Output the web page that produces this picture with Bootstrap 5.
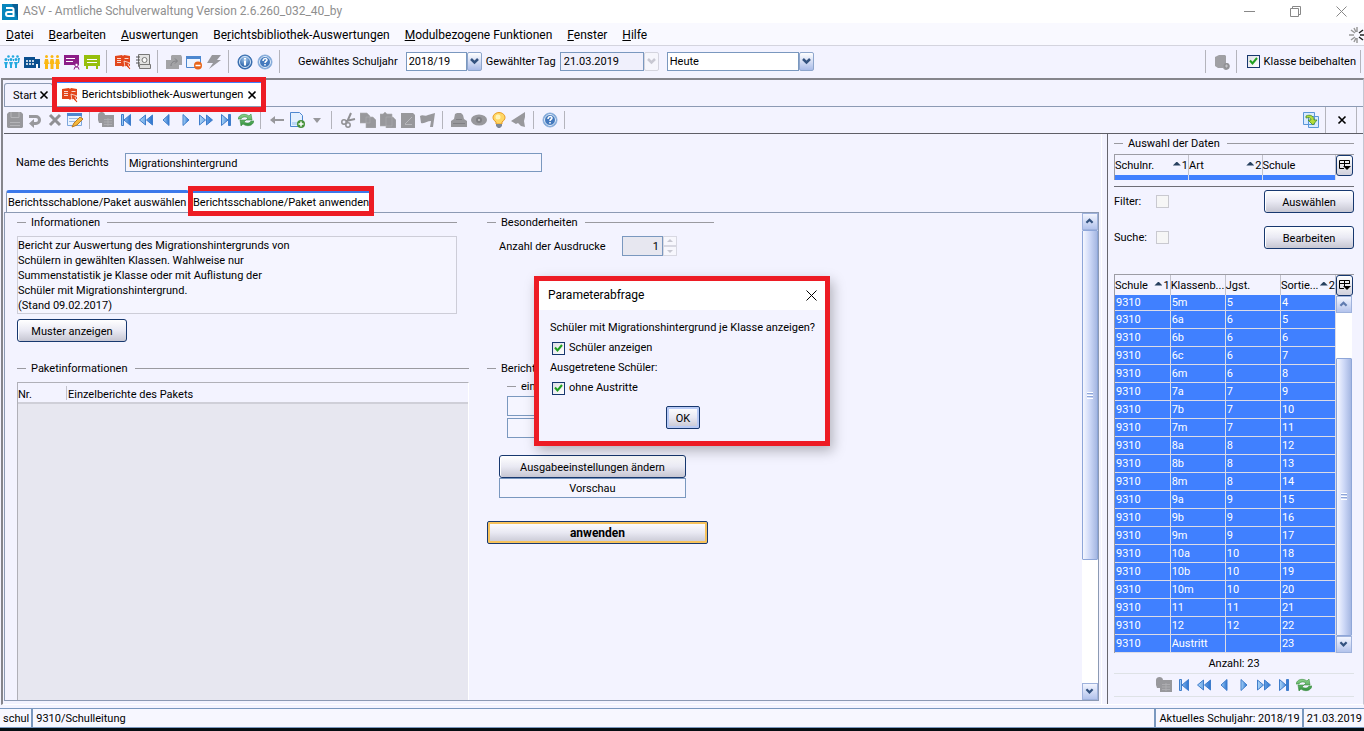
<!DOCTYPE html>
<html lang="de">
<head>
<meta charset="utf-8">
<meta name="viewport" content="width=device-width, initial-scale=1">
<title>ASV - Amtliche Schulverwaltung</title>
<link href="https://cdn.jsdelivr.net/npm/bootstrap@5.3.0/dist/css/bootstrap.min.css" rel="stylesheet">
<style>
:root{--face:#f3f3ff;--line:#8c9ab4;--field:#7a98bf;--navy:#17386f;--mark:#ed1c24;--sel:#4080ff}
body{font-family:Roboto,"Noto Sans",sans-serif;font-size:11px;line-height:15px;color:#000;background:var(--face);overflow:hidden}
svg{display:block}
button,input,select{font:inherit;color:inherit}
.titlebar{height:23px;background:#fff;color:#8f8f8f;font-size:12px;padding-left:2px}
.titlebar .caption{padding-left:5px}
.wbtn{width:46px;height:20px;border:0;background:none;padding:0}
.menubar{height:23px;background:#f9f9ff;border-bottom:1px solid #d4d4de;font-size:12px;padding:2px 0 0 6px;gap:15px}
.menubar a{color:#000;text-decoration:none}
.mainbar{height:31px;padding-left:2px;margin-bottom:1px}
.tool{width:20px;height:22px;border:0;background:none;padding:0 2px}
.tool svg{width:16px;height:16px}
.vsep{width:1px;margin:0 6px 0 4px;background:#b4b4bc;align-self:stretch;flex:none}
.combo{height:19px;border:1px solid var(--field);background:#fff;padding:0 3px;appearance:none;border-radius:0;line-height:15px}
select.combo{padding:0 0 0 2px}
.drop{width:15px;height:19px;border:1px solid #8ea6cc;border-radius:2px;background:linear-gradient(#fff,#a9bbe8);padding:0}
.drop:disabled{border-color:#d4d4de;background:#f6f6fc}
input.tick{appearance:none;width:13px;height:13px;border:1px solid var(--navy);margin:0;flex:none;background:#fff}
input.tick:checked{background:linear-gradient(135deg,#dfe0e4,#fff)}
input.tick:disabled{border-color:#c9c9d0;background:#f6f6f6}
.tickbox{position:relative;display:flex}
.tickbox svg{position:absolute;inset:2px;pointer-events:none}
.frame{border:2px solid #85858c;border-right:1px solid #c4c6d2;border-bottom:1px solid #fff;margin:0 0 3px 1px;padding-left:1px}
.doctabs{height:27px;border-bottom:1px solid var(--line)}
.doctab{border:1px solid var(--line);border-bottom:0;border-radius:3px 3px 0 0;height:23px;padding:0 2px 0 8px;gap:2px;position:relative}
.closer{border:0;background:none;padding:0;width:11px;height:14px}
.marked{position:relative}
.marked::after{content:"";position:absolute;border:5px solid var(--mark);pointer-events:none;z-index:2}
.doctab.marked{background:#fff;border-width:2px 0 0;border-top-color:var(--sel);border-radius:0;height:25px;padding:0 3px 0 5px;margin-left:4px;gap:4px}
.doctab.marked::after{inset:-6px -5px -6px}
.editbar{height:27px;border-bottom:1px solid #5e5e66;padding-left:1px}
.leftpane{border-right:1px solid #fff}
.reportname{padding:19px 0 0 12px}
.reportname label{width:109px}
.reportname input{width:417px;height:19px;border:1px solid var(--field);background:#f5f5ff;padding:1px 3px 0}
.subtabs{margin-top:18px;padding-left:2px;height:22px}
.subtab{border:1px solid var(--line);border-top:3px solid #3c78ea;border-bottom:0;border-radius:3px 3px 0 0;background:#fafaff;padding:0 0 0 1px;height:22px;white-space:nowrap;width:183px;text-align:left}
.subtab.marked{background:#fff;border-width:3px 0 0;border-radius:0;margin-left:4px;padding:0;width:176px}
.subtab.marked::after{inset:-7px -5px -4px}
.subpane{border:1px solid var(--line);margin:0 2px 3px 0}
.legendline{gap:5px;height:18px}
.legendline::before{content:"";width:9px;height:1px;background:#9a9aa0}
.legendline::after{content:"";flex:1;height:1px;background:#9a9aa0;margin-left:2px}
.colinfo{width:452px;margin-left:12px}
.colrun{width:227px;margin-left:18px}
.infotext{border:1px solid #cdcdd8;height:78px;padding:1px 0 0;width:440px;margin-top:5px;background:#f5f5ff}
.swing{border:1px solid var(--navy);border-radius:3px;background:linear-gradient(#fff,#e9e9f3 50%,#c6c6d2);height:23px;padding:1px 0 0;box-shadow:inset 1px 0 #fff}
.go{border-radius:2px;box-shadow:inset 0 0 0 2px #f6c25c;font-weight:700;font-size:12px;width:221px}
.packet{border:1px solid #b0b0b8;border-right-color:#fff;border-bottom:0;background:#e7e7f0;margin-top:5px}
.packet table{width:100%;background:var(--face);border-bottom:2px solid #cfcfd8}
.packet th{font-weight:400;height:20px;padding:3px 0 0}
.packet th + th{background:linear-gradient(#c2c2cc,#c2c2cc) 0 3px/1px 14px no-repeat;padding-left:2px}
.spinval{width:41px;height:20px;border:1px solid var(--field);background:#e7e7f0;text-align:right;padding:0 3px}
.spinbtn{width:14px;height:10px;border:1px solid #d8d8e2;background:#f7f7fd;padding:0}
.plainfield{height:20px;border:1px solid var(--field);background:#f5f5ff}
.sbar{width:16px;background:#fff;flex:none}
.sbar button{height:17px;border:1px solid #9fb2dc;background:linear-gradient(#f2f5ff,#b3c3ec);padding:0;width:100%}
.thumb{border:1px solid #8ea6d8;border-radius:1px;background:linear-gradient(90deg,#f5f7ff,#cdd8f7 50%,#a5b7e2)}
.grip{width:6px;height:7px;background:repeating-linear-gradient(#fff 0 1px,#8ea6d8 1px 2px,transparent 2px 3px)}
.sidepane{width:256px;flex:none;border-left:1px solid #66666e;margin-left:5px;padding:0 9px 0 6px}
.sidepane table{width:221px;table-layout:fixed}
.sidepane th{font-weight:400;white-space:nowrap;padding:0;height:20px;border-right:1px solid #c2c2cc}
.sidepane td{background:var(--sel);color:#fff;border:1px solid #dcdce6;border-width:0 1px 1px 0;height:18px;padding:1px 0 0 1px;line-height:15px}
.gridwrap{border:1px solid #9c9ca4;border-width:1px 0 0 1px}
.sidepane .cutrow td{height:15px;line-height:13px;padding-top:0}
.sidepane .selstrip td{height:5px;border-bottom:0}
.colbtn{width:17px;height:21px;border:1px solid var(--navy);border-radius:3px;background:linear-gradient(#fff,#d0d0dc);padding:0}
.rule{height:1px;background:#6e6e76}
.up{width:8px;height:4px;background:#27405f;clip-path:polygon(50% 0,100% 100%,0 100%);display:inline-block;margin:0 1px 3px 0}
.status{border:1px solid var(--field);border-width:1px 0 1px;background:#f7f7ff;height:20px}
.status div{border-right:2px solid var(--field);padding:2px 2px 0 3px}
.taskedge{height:3px;background:#050d12}
.ask{position:absolute;left:534px;top:276px;width:296px;height:170px;border:5px solid var(--mark);background:var(--face);box-shadow:3px 5px 12px #0004;z-index:5}
.ask header{height:29px;background:#fff;padding:0 8px 0 9px;font-size:12px}
.ask .fields{padding:8px 0 0 11px;height:88px;line-height:20px;white-space:nowrap}
.ok{width:34px;border-radius:2px;box-shadow:inset 0 0 0 2px #b9cbf6;margin:8px 0 0 127px}
</style>
</head>
<body class="vh-100 d-flex flex-column">
<svg width="0" height="0" class="position-absolute" aria-hidden="true">
<defs>
<linearGradient id="bl" x1="0" x2="1"><stop offset="0" stop-color="#a9d4f8"/><stop offset="1" stop-color="#2a72cf"/></linearGradient>
<linearGradient id="gn" x1="0" x2="0" y2="1"><stop offset="0" stop-color="#8fd38c"/><stop offset="1" stop-color="#2f8f3c"/></linearGradient>
<radialGradient id="orb" cy=".3"><stop offset="0" stop-color="#a8cbef"/><stop offset="1" stop-color="#3268ac"/></radialGradient>
</defs>
<symbol id="people" viewBox="0 0 16 16"><g fill="#25a9df"><circle cx="4.500" cy="2.500" r="1.300"/><circle cx="9" cy="2.500" r="1.300"/><circle cx="13.500" cy="2.500" r="1.300"/><circle cx="2" cy="5.500" r="1.500"/><circle cx="7" cy="5.500" r="1.500"/><circle cx="12" cy="5.500" r="1.500"/><path d="M0 8h4l-1 3v3H1v-3zM5 8h4l-1 3v3H6v-3zM10 8h4l-1 3v3h-2v-3zM4 5h1v2H4zM9 5h1v2H9zM14 4h2l-1 5h-1z"/></g></symbol>
<symbol id="school" viewBox="0 0 16 16"><path fill="#0b4f8f" d="M0 3h11v2h5v9H0z"/><path stroke="#fff" stroke-width="1.500" stroke-dasharray="2 1" d="M2 7h8M2 10h8"/><path fill="#fff" d="M12 10h2v4h-2z"/></symbol>
<symbol id="staff" viewBox="0 0 16 16"><g fill="#fbb814"><circle cx="2.500" cy="2.500" r="1.500"/><circle cx="8" cy="2.500" r="1.500"/><circle cx="13.500" cy="2.500" r="1.500"/><path d="M1 5h3l1 5H4v5H1v-5H0zM6.500 5h3l1 5h-1v5h-3v-5h-1zM12 5h3l1 5h-1v5h-3v-5h-1z"/></g></symbol>
<symbol id="board" viewBox="0 0 16 16"><path fill="#8c1d88" d="M0 1h15v10H0z"/><path stroke="#fff" d="M2 4.500h9M2 7.500h7"/><circle cx="12.500" cy="11" r="1.700" fill="#fff" stroke="#8c1d88"/><path d="M10 15.500l1-2.500h3l1 2.500" stroke="#8c1d88" fill="none"/></symbol>
<symbol id="chalk" viewBox="0 0 16 16"><path fill="#96bf0d" d="M0 1h16v11H0zM2 12h2v3H2zM12 12h2v3h-2z"/><path stroke="#fff" d="M3 5.500h10M3 8.500h10"/></symbol>
<symbol id="book" viewBox="0 0 16 16"><path fill="#e2471c" d="M0 2l7-1 1 1 1-1 6 1v10H9l-1 1-1-1H0z"/><path stroke="#fff" stroke-width=".8" d="M2 4.500h4M2 6.500h4M2 8.500h4M9.500 4.500h4"/><path fill="#e2471c" stroke="#fff" stroke-width=".7" d="M9 7l6 2-2 1.500 2.500 4-1 1-3.500-3.500-1 1.500z"/></symbol>
<symbol id="notebook" viewBox="0 0 16 16"><path fill="#e2e2e2" stroke="#777" d="M3.500.5h11v12h-11z"/><path stroke="#555" d="M1 3h4M1 6h4M1 9h4"/><path stroke="#777" fill="#ddd" d="M4.500 10.500h11v4h-11z"/><circle cx="9.500" cy="6" r="2.500" fill="#fafafa" stroke="#777"/></symbol>
<symbol id="folder" viewBox="0 0 16 16"><path fill="#a3a3a6" d="M0 6h5V2l1-1h9l1 2v8h-3v4H0z"/><path d="M5 12c0-4 3-5 6-5M9 4.500L11.500 7 9 9.500" fill="none" stroke="#808084"/></symbol>
<symbol id="winminus" viewBox="0 0 16 16"><path fill="#eef5ff" stroke="#4d87cf" d="M.5 2.500h14v11H.5z"/><path fill="#4d87cf" d="M0 2h15v3H0z"/><circle cx="12" cy="11.500" r="4" fill="#e8661a"/><path stroke="#fff" stroke-width="1.500" d="M9.500 11.500h5"/></symbol>
<symbol id="bolt" viewBox="0 0 16 16"><path fill="#98989c" d="M6 1h9l-4 5h4L3 15l4-6H1z"/></symbol>
<symbol id="info" viewBox="0 0 16 16"><circle cx="8" cy="8" r="7" fill="url(#orb)" stroke="#2f67ab"/><circle cx="8" cy="8" r="5.500" fill="none" stroke="#d7e8fa"/><path d="M8 4v1.600M8 6.500v5" stroke="#fff" stroke-width="2"/></symbol>
<symbol id="help" viewBox="0 0 16 16"><circle cx="8" cy="8" r="7" fill="#6b9bd2" stroke="#8db0dc"/><circle cx="8" cy="8" r="5.500" fill="#4479bd" stroke="#e5effb"/><path d="M6 7c0-3 4-3 4-1 0 1.500-2 1-2 3M8 10v1.500" fill="none" stroke="#fff" stroke-width="1.500"/></symbol>
<symbol id="save" viewBox="0 0 16 16"><path fill="#98989c" d="M0 2l2-2h12l2 2v13l-1 1H1l-1-1z"/><path stroke="#b4b4b8" d="M4 0v5.500h8V0M3 10.500h10M3 13.500h10" fill="none"/></symbol>
<symbol id="undo" viewBox="0 0 16 16"><path d="M2 4.500h7a3.500 3.500 0 0 1 0 7H6" fill="none" stroke="#98989c" stroke-width="3"/><path fill="#98989c" d="M7 7v9l-5-4.500z"/></symbol>
<symbol id="cross" viewBox="0 0 16 16"><path d="M3 3l10 10M13 3L3 13" stroke="#909094" stroke-width="3"/></symbol>
<symbol id="formedit" viewBox="0 0 16 16"><path fill="#eaf3ff" stroke="#7ca6dc" d="M.5 1.500h14v12H.5z"/><path fill="#4d87cf" d="M0 1h15v3H0z"/><path stroke="#9dbbe2" d="M2 6.500h11M2 9.500h8"/><path d="M5 15l2-4 6-6 3 2-6 6z" fill="#f5b83a" stroke="#b87822"/></symbol>
<symbol id="gtable" viewBox="0 0 16 16"><path fill="#98989c" d="M0 3c0-4 7-4 7 0h9v12H4v-4H1L0 8z"/><path stroke="#b0b0b4" stroke-width=".8" d="M6 7.500h8M6 10h8M6 12.500h8M10 6v8"/></symbol>
<symbol id="prev" viewBox="0 0 16 16"><path fill="url(#bl)" stroke="#3f7dcb" d="M11 2.500v11L5 8z"/></symbol>
<symbol id="next" viewBox="0 0 16 16"><path fill="url(#bl)" stroke="#3f7dcb" d="M5 2.500v11L11 8z"/></symbol>
<symbol id="rew" viewBox="0 0 16 16"><path fill="url(#bl)" stroke="#3f7dcb" d="M7.500 3v10L1.500 8zM14.500 3v10l-6-5z"/></symbol>
<symbol id="ffwd" viewBox="0 0 16 16"><path fill="url(#bl)" stroke="#3f7dcb" d="M1.500 3v10l6-5zM8.500 3v10l6-5z"/></symbol>
<symbol id="first" viewBox="0 0 16 16"><path fill="url(#bl)" stroke="#3f7dcb" d="M3.500 2.500h2v11h-2zM12.500 2.500v11L6 8z"/></symbol>
<symbol id="last" viewBox="0 0 16 16"><path fill="url(#bl)" stroke="#3f7dcb" d="M10.500 2.500h2v11h-2zM3.500 2.500v11L10 8z"/></symbol>
<symbol id="refresh" viewBox="0 0 16 16"><path fill="url(#gn)" stroke="#3c8d42" stroke-width=".6" d="M0 7c1-5 7-6 11-3l2-2 1 6H8l2-2C7 4 4 5 3 7zM16 9c-1 5-7 6-11 3l-2 2-1-6h6l-2 2c3 2 6 1 7-1z"/></symbol>
<symbol id="back" viewBox="0 0 16 16"><path fill="#98989c" d="M1 8l5-4v3h9v2H6v3z"/></symbol>
<symbol id="newdoc" viewBox="0 0 16 16"><path fill="#e4f0ff" stroke="#4d87cf" d="M1.500.5h9l3 3v11h-12z"/><path fill="#bcd7f6" d="M3 10h9v3H3z"/><circle cx="12" cy="12" r="4" fill="#47923a"/><path stroke="#fff" stroke-width="1.500" d="M12 9.500v5M9.500 12h5"/></symbol>
<symbol id="caret" viewBox="0 0 16 16"><path fill="#98989c" d="M4 6h8l-4 5z"/></symbol>
<symbol id="cut" viewBox="0 0 16 16"><path d="M11 1L7 10M15 7L6 9" stroke="#909094" stroke-width="2"/><circle cx="4" cy="10" r="2.200" fill="none" stroke="#909094" stroke-width="1.500"/><circle cx="8" cy="13" r="2.200" fill="none" stroke="#909094" stroke-width="1.500"/></symbol>
<symbol id="copy" viewBox="0 0 16 16"><path fill="#98989c" stroke="#b0b0b4" stroke-width=".6" d="M0 1h7l3 3v7H0zM6 5h7l3 3v8H6z"/></symbol>
<symbol id="paste" viewBox="0 0 16 16"><path fill="#98989c" stroke="#b0b0b4" stroke-width=".6" d="M0 2h3l2-2 2 2h5v12H0zM6 5h7l3 3v8H6z"/></symbol>
<symbol id="gedit" viewBox="0 0 16 16"><path fill="#98989c" d="M1 1h12l2 2v13H1z"/><path d="M5 12l7-7M5 12.500h7" stroke="#b8b8bc"/></symbol>
<symbol id="gflag" viewBox="0 0 16 16"><path fill="#98989c" d="M0 4c3-2 5 1 8-1l7-2-2 14h-3l1-6c-4 0-6 3-10 2z"/></symbol>
<symbol id="print" viewBox="0 0 16 16"><path fill="#98989c" d="M4 2l2-1h4l2 2 1 4 3 2v6H0V9l3-2z"/><path stroke="#808084" d="M2 11.500h12M5 7.500h6"/></symbol>
<symbol id="eye" viewBox="0 0 16 16"><ellipse cx="8" cy="8" rx="8" ry="5.500" fill="#98989c"/><circle cx="8" cy="8" r="3" fill="#808084"/><circle cx="8" cy="8" r="1" fill="#ccc"/></symbol>
<symbol id="bulb" viewBox="0 0 16 16"><path fill="#ffd765" stroke="#e79b25" d="M5 10C-1 6 3 .5 8 .5s9 5.500 3 9.500v2H5z"/><circle cx="7" cy="5" r="2.500" fill="#fff4b8"/><path fill="#7d8796" d="M5 12h6v2l-2 2H7l-2-2z"/></symbol>
<symbol id="horn" viewBox="0 0 16 16"><path fill="#98989c" d="M0 9L14 0v5l-1 4 1 6-4-1-3-3-2 1z"/></symbol>
<symbol id="gdoc" viewBox="0 0 16 16"><path fill="#a0a0a4" d="M1 3l4-2h6l1 1v7a3.500 3.500 0 1 1-3 5H4l-3-2z"/><circle cx="12.500" cy="12" r="3" fill="#929296"/><path stroke="#c4c4c8" d="M11 12h3M12.500 10.500v3"/></symbol>
<symbol id="transfer" viewBox="0 0 16 16"><path fill="#d9ebff" stroke="#5a97d8" d="M.5.500h11v12H.5zM5.500 4.500h10v11h-10z"/><path fill="#b4dc3a" stroke="#438c2a" stroke-width=".8" d="M3 4c4-2 8 0 8 4h3l-4 5-5-5h3c0-2-2-3-5-2z"/></symbol>
<symbol id="chev" viewBox="0 0 13 17"><path d="M3 6l3.500 3.500L10 6" fill="none" stroke="currentColor" stroke-width="2.500"/></symbol>
<symbol id="chevup" viewBox="0 0 13 17"><path d="M3 10l3.500-3.500L10 10" fill="none" stroke="currentColor" stroke-width="2.500"/></symbol>
<symbol id="check" viewBox="0 0 9 9"><path d="M1 3.500l2.500 3L8 1" fill="none" stroke="#20a020" stroke-width="2"/></symbol>
<symbol id="x" viewBox="0 0 10 10"><path d="M1.500 1.500l7 7M8.500 1.500l-7 7" stroke="#000" stroke-width="1.600"/></symbol>
<symbol id="cols" viewBox="0 0 15 19"><path d="M7 12.500H2.500v-8h10v3M2 7.500h11M7.500 4v6" fill="none" stroke="#000"/><path d="M6 10h8l-4 4z"/></symbol>
</svg>

<header class="titlebar d-flex align-items-center">
  <svg width="16" height="16" viewBox="0 0 16 16"><rect width="16" height="16" fill="#0786bd"/><path fill="#0a5f95" d="M10 0h6v16z"/><path d="M4 4h6q1.500 0 1.500 1.500V12H6q-2 0-2-2t2-2h5" fill="none" stroke="#fff" stroke-width="2"/></svg>
  <span class="caption me-auto">ASV - Amtliche Schulverwaltung Version 2.6.260_032_40_by</span>
  <button class="wbtn" aria-label="Minimieren"><svg class="mx-auto" width="11" height="11"><path d="M0 5.500h11" stroke="#888"/></svg></button>
  <button class="wbtn" aria-label="Wiederherstellen"><svg class="mx-auto" width="11" height="11"><path d="M.5 2.500h8v8h-8zM2.500 2V.5h8v8H9" fill="none" stroke="#888"/></svg></button>
  <button class="wbtn" aria-label="Schließen"><svg class="mx-auto" width="11" height="11"><path d="M.5.500l10 10M10.500.500l-10 10" stroke="#888"/></svg></button>
</header>

<nav class="menubar d-flex align-items-center">
  <a href="#"><u>D</u>atei</a><a href="#"><u>B</u>earbeiten</a><a href="#"><u>A</u>uswertungen</a><a href="#">Be<u>r</u>ichtsbibliothek-Auswertungen</a><a href="#"><u>M</u>odulbezogene Funktionen</a><a href="#"><u>F</u>enster</a><a href="#"><u>H</u>ilfe</a>
  <svg class="ms-auto" width="15" height="16" viewBox="0 0 15 16"><g stroke="#999" stroke-width="1.500"><path d="M8 0v5M8 11v5M0 8h5M2 3l4 3M2 13l4-3M5 1l2 4M5 15l2-4"/><path stroke="#222" d="M11 8h4M10 6l4-3M10 10l4 3"/></g></svg>
</nav>

<div class="mainbar d-flex align-items-center">
  <div class="d-flex align-items-center h-100 py-1" data-icons="people school staff board chalk | book notebook | folder winminus bolt | info help |"></div>
  <label for="jahr" class="ms-2 ps-1">Gewähltes Schuljahr</label>
  <select id="jahr" class="combo ms-2" style="width:61px"><option>2018/19</option></select><button class="drop" aria-label="Schuljahr wählen"><svg width="13" height="17" color="#33527f"><use href="#chev"/></svg></button>
  <label for="tag" class="ms-1">Gewählter Tag</label>
  <input id="tag" class="combo ms-1" style="width:84px;background:#f0f0fc" value="21.03.2019"><button class="drop" disabled aria-label="Tag wählen"><svg width="13" height="17" color="#c8c8d2"><use href="#chev"/></svg></button>
  <select class="combo ms-2" style="width:132px" aria-label="Stichtag"><option>Heute</option></select><button class="drop" aria-label="Stichtag wählen"><svg width="13" height="17" color="#33527f"><use href="#chev"/></svg></button>
  <div class="d-flex align-items-center h-100 py-1 ms-auto" data-icons="| gdoc |"></div>
  <label class="d-flex align-items-center gap-1 ps-1"><span class="tickbox"><input class="tick" type="checkbox" checked><svg width="9" height="9"><use href="#check"/></svg></span>Klasse beibehalten</label>
  <div class="d-flex h-100 py-1" style="margin-right:-3px"><i class="vsep"></i></div>
</div>

<main class="frame flex-grow-1 d-flex flex-column" style="min-height:0">
  <div class="doctabs d-flex align-items-end flex-shrink-0">
    <div class="doctab d-flex align-items-center"><span>Start</span><button class="closer" aria-label="Start schließen"><svg width="10" height="10"><use href="#x"/></svg></button></div>
    <div class="doctab marked d-flex align-items-center"><svg width="16" height="16"><use href="#book"/></svg><span>Berichtsbibliothek-Auswertungen</span><button class="closer" aria-label="Reiter schließen"><svg width="10" height="10"><use href="#x"/></svg></button></div>
  </div>
  <div class="editbar d-flex align-items-center flex-shrink-0">
    <div class="d-flex align-items-center h-100 py-1" data-icons="save undo cross formedit | gtable first rew prev next ffwd last refresh | back newdoc caret | cut copy paste gedit gflag | print eye bulb horn | help |"></div>
    <div class="d-flex align-items-center h-100 ms-auto" data-icons="transfer |"></div>
    <button class="tool" aria-label="Ansicht schließen"><svg class="mx-auto" style="width:10px;height:10px"><use href="#x"/></svg></button><i class="vsep"></i>
  </div>

  <div class="flex-grow-1 d-flex" style="min-height:0">
    <section class="leftpane flex-grow-1 d-flex flex-column">
      <div class="reportname d-flex align-items-center"><label for="name">Name des Berichts</label><input id="name" value="Migrationshintergrund"></div>
      <div class="subtabs d-flex">
        <button class="subtab">Berichtsschablone/Paket auswählen</button>
        <button class="subtab marked">Berichtsschablone/Paket anwenden</button>
      </div>
      <div class="subpane flex-grow-1 d-flex" style="min-height:0">
        <div class="colinfo d-flex flex-column">
          <div class="legendline d-flex align-items-center me-2 pe-1">Informationen</div>
          <div class="infotext">Bericht zur Auswertung des Migrationshintergrunds von<br>Schülern in gewählten Klassen. Wahlweise nur<br>Summenstatistik je Klasse oder mit Auflistung der<br>Schüler mit Migrationshintergrund.<br>(Stand 09.02.2017)</div>
          <div style="margin:5px 0 17px"><button class="swing" style="width:110px">Muster anzeigen</button></div>
          <div class="legendline d-flex align-items-center">Paketinformationen</div>
          <div class="packet flex-grow-1"><table><thead><tr><th style="width:48px">Nr.</th><th>Einzelberichte des Pakets</th></tr></thead></table></div>
        </div>
        <div class="colrun">
          <div class="legendline d-flex align-items-center">Besonderheiten</div>
          <div class="d-flex align-items-center" style="margin:5px 0 0 12px;height:20px"><label for="anz" style="width:123px">Anzahl der Ausdrucke</label><input id="anz" class="spinval" value="1" disabled><span class="d-flex flex-column"><button class="spinbtn" disabled aria-label="Mehr"><svg width="12" height="8"><path d="M3 5h6L6 2z" fill="#c8c8d2"/></svg></button><button class="spinbtn" disabled aria-label="Weniger"><svg width="12" height="8"><path d="M3 3h6L6 6z" fill="#c8c8d2"/></svg></button></span></div>
          <div class="legendline d-flex align-items-center" style="margin-top:103px">Bericht</div>
          <div style="margin:0 20px 0 20px"><div class="legendline d-flex align-items-center">eing</div>
            <div class="plainfield" style="margin:1px 0 2px"></div><div class="plainfield"></div></div>
          <div style="margin:17px 0 23px 12px;width:187px"><button class="swing w-100 d-block">Ausgabeeinstellungen ändern</button><div class="plainfield text-center" style="padding-top:2px">Vorschau</div></div>
          <button class="swing go">anwenden</button>
        </div>
        <div class="sbar ms-auto d-flex flex-column text-center"><button aria-label="Nach oben"><svg width="13" height="15" color="#33527f"><use href="#chevup"/></svg></button><div class="thumb d-flex align-items-center justify-content-center" style="height:330px"><i class="grip"></i></div><button class="mt-auto" aria-label="Nach unten"><svg width="13" height="15" color="#33527f"><use href="#chev"/></svg></button></div>
      </div>
    </section>

    <aside class="sidepane d-flex flex-column">
      <div class="legendline d-flex align-items-center">Auswahl der Daten</div>
      <div class="gridwrap d-flex" style="margin-top:2px"><table><thead><tr><th>Schulnr.<span class="float-end"><i class="up"></i>1</span></th><th>Art<span class="float-end"><i class="up"></i>2</span></th><th>Schule</th></tr></thead><tbody class="selstrip"><tr><td></td><td></td><td></td></tr></tbody></table><button class="colbtn" aria-label="Spalten"><svg width="15" height="19"><use href="#cols"/></svg></button></div>
      <div class="rule" style="margin:6px 0 3px"></div>
      <div class="d-flex align-items-center" style="height:23px"><label for="filter" style="width:42px">Filter:</label><input id="filter" class="tick" type="checkbox" disabled><button class="swing ms-auto" style="width:90px">Auswählen</button></div>
      <div class="d-flex align-items-center" style="height:23px;margin:13px 0 25px"><label for="suche" style="width:42px">Suche:</label><input id="suche" class="tick" type="checkbox" disabled><button class="swing ms-auto" style="width:90px">Bearbeiten</button></div>
      <div class="gridwrap d-flex"><table><thead><tr><th>Schule<span class="float-end"><i class="up"></i>1</span></th><th>Klassenb...</th><th>Jgst.</th><th>Sortie...<span class="float-end"><i class="up"></i>2</span></th></tr></thead><tbody id="klassen"></tbody></table>
        <div class="d-flex flex-column"><button class="colbtn" aria-label="Spalten"><svg width="15" height="19"><use href="#cols"/></svg></button>
          <div class="sbar flex-grow-1 d-flex flex-column"><button aria-label="Nach oben"><svg width="13" height="15" color="#5f7bb0"><use href="#chevup"/></svg></button><div class="thumb flex-grow-1 d-flex align-items-center justify-content-center" style="margin-top:45px"><i class="grip"></i></div><button aria-label="Nach unten"><svg width="13" height="15" color="#33527f"><use href="#chev"/></svg></button></div></div>
      </div>
      <div class="text-center" style="margin:3px 0 2px">Anzahl: 23</div>
      <div class="d-flex justify-content-center border-top border-bottom" data-icons="gtable first rew prev next ffwd last refresh"></div>
    </aside>
  </div>
</main>

<footer class="status d-flex flex-shrink-0"><div>schul</div><div class="flex-grow-1">9310/Schulleitung</div><div>Aktuelles Schuljahr: 2018/19</div><div class="border-0">21.03.2019</div></footer>
<div class="taskedge flex-shrink-0"></div>

<div class="ask" role="dialog" aria-label="Parameterabfrage">
  <header class="d-flex align-items-center justify-content-between"><span>Parameterabfrage</span><button class="closer" aria-label="Schließen"><svg width="11" height="11"><path d="M.5.500l10 10M10.500.500l-10 10" stroke="#000"/></svg></button></header>
  <div class="fields">
    <div>Schüler mit Migrationshintergrund je Klasse anzeigen?</div>
    <label class="d-flex align-items-center gap-1" style="padding-left:2px"><span class="tickbox"><input class="tick" type="checkbox" checked><svg width="9" height="9"><use href="#check"/></svg></span>Schüler anzeigen</label>
    <div>Ausgetretene Schüler:</div>
    <label class="d-flex align-items-center gap-1" style="padding-left:2px"><span class="tickbox"><input class="tick" type="checkbox" checked><svg width="9" height="9"><use href="#check"/></svg></span>ohne Austritte</label>
  </div>
  <button class="swing ok d-block">OK</button>
</div>

<script src="https://cdn.jsdelivr.net/npm/bootstrap@5.3.0/dist/js/bootstrap.bundle.min.js"></script>
<script>
document.querySelectorAll('[data-icons]').forEach(bar => {
  bar.innerHTML = bar.dataset.icons.split(' ').map(n => n === '|' ? '<i class="vsep"></i>'
    : `<button class="tool" aria-label="${n}"><svg><use href="#${n}"/></svg></button>`).join('');
});
const klassen = ['5m','6a','6b','6c','6m','7a','7b','7m','8a','8b','8m','9a','9b','9m','10a','10b','10m','11','12','Austritt'];
document.getElementById('klassen').innerHTML = klassen.map((k, i) =>
  `<tr${i ? '' : ' class="cutrow"'}><td>9310</td><td>${k}</td><td>${parseInt(k) || ''}</td><td>${i + 4}</td></tr>`).join('');
</script>
</body>
</html>
